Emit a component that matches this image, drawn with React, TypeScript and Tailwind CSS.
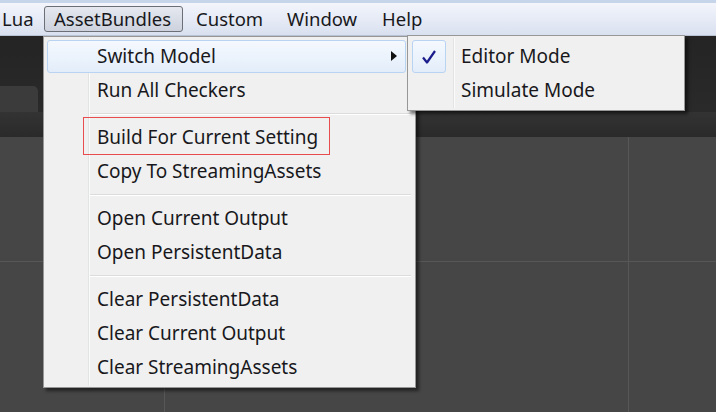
const font = { fontFamily: '"Noto Sans", "Open Sans", sans-serif' };

type Item = { label: string; arrow?: boolean; active?: boolean; marked?: boolean } | "sep";

const items: Item[] = [
  { label: "Switch Model", arrow: true, active: true },
  { label: "Run All Checkers" },
  "sep",
  { label: "Build For Current Setting", marked: true },
  { label: "Copy To StreamingAssets" },
  "sep",
  { label: "Open Current Output" },
  { label: "Open PersistentData" },
  "sep",
  { label: "Clear PersistentData" },
  { label: "Clear Current Output" },
  { label: "Clear StreamingAssets" },
];

function MenuRow({ item }: { item: Exclude<Item, "sep"> }) {
  return (
    <div className="relative h-[34px] flex items-center">
      {item.active && (
        <div className="absolute left-[3px] right-[9px] top-[1px] bottom-0 rounded-[3px] border border-[#b9d3f3] bg-gradient-to-b from-[#f5f9fe] to-[#e3edfa]" />
      )}
      {item.marked && (
        <div className="absolute left-[39px] top-[-3px] w-[247px] h-[38px] border-[1.5px] border-[#e84c4e]" />
      )}
      <span className="relative pl-[53px] text-[19px] text-[#18181c]">{item.label}</span>
      {item.arrow && (
        <svg className="absolute left-[347px] top-[12px]" width="6" height="10" viewBox="0 0 6 10">
          <path d="M0 0 L6 5 L0 10 Z" fill="#111" />
        </svg>
      )}
    </div>
  );
}

export default function App() {
  return (
    <div className="relative w-[716px] h-[412px] overflow-hidden bg-[#464646]" style={font}>
      {/* menu bar */}
      <div className="h-[36px] border-t-[3px] border-[#c7d5ea] bg-gradient-to-b from-[#f3f5fb] via-[#e6ebf6] to-[#d9e0ef] border-b border-b-[#b9c2d3] flex items-center text-[18.5px] text-[#18181c]">
        <span className="pl-[2px] w-[44px]">Lua</span>
        <span className="h-[26px] w-[139px] pl-[9px] flex items-center rounded-[3px] border border-[#6c6f75] bg-gradient-to-b from-[#e5e8ef] to-[#cdd2de]">
          AssetBundles
        </span>
        <span className="ml-[13px] w-[91px]">Custom</span>
        <span className="w-[95px]">Window</span>
        <span>Help</span>
      </div>

      {/* editor header */}
      <div className="h-[101px] bg-gradient-to-b from-[#242424] to-[#2c2c2c] flex flex-col">
        <div className="h-[50px]" />
        <div className="h-[26px] w-[38px] rounded-tr-[5px] bg-[#3b3b3b]" />
        <div className="flex-1 bg-gradient-to-b from-[#333333] to-[#2a2a2a]" />
      </div>

      {/* scene grid */}
      <div className="grid grid-cols-[165px_464px_1fr] grid-rows-[125px_1fr] h-[275px]">
        <div className="border-r border-b border-[#575757]" />
        <div className="border-r border-b border-[#575757]" />
        <div className="border-b border-[#575757]" />
        <div className="border-r border-[#575757]" />
        <div className="border-r border-[#575757]" />
        <div />
      </div>

      {/* main dropdown */}
      <div className="absolute left-[43px] top-[36px] w-[373px] h-[352px] border border-[#979797] bg-[#f0f0f0] shadow-[3px_3px_3px_rgba(0,0,0,0.5)] pt-[2px]">
        <div className="absolute left-[44px] top-[2px] bottom-[2px] w-[2px] border-l border-[#e2e3e3] bg-white/70" />
        {items.map((item, i) =>
          item === "sep" ? (
            <div key={i} className="h-[13px] flex items-center pl-[46px] pr-[4px]">
              <div className="w-full h-[2px] border-t border-[#dcdcdc] bg-white" />
            </div>
          ) : (
            <MenuRow key={i} item={item} />
          )
        )}
      </div>

      {/* submenu */}
      <div className="absolute left-[407px] top-[35px] w-[278px] h-[76px] border border-[#979797] bg-[#f0f0f0] shadow-[3px_3px_3px_rgba(0,0,0,0.5)] pt-[3px]">
        <div className="absolute left-[45px] top-[2px] bottom-[2px] w-[2px] border-l border-[#e2e3e3] bg-white/70" />
        <div className="relative h-[34px] flex items-center">
          <div className="absolute left-[4px] top-[1px] w-[34px] h-[33px] rounded-[3px] border border-[#b9d3f3] bg-gradient-to-b from-[#f5f9fe] to-[#e3edfa] flex items-center justify-center">
            <svg width="16" height="16" viewBox="0 0 16 16">
              <path d="M2 8.5 L6 13.5 L14 2" fill="none" stroke="#1c1d8c" strokeWidth="2.2" strokeLinejoin="round" />
            </svg>
          </div>
          <span className="relative pl-[53px] text-[19px] text-[#18181c]">Editor Mode</span>
        </div>
        <div className="relative h-[34px] flex items-center">
          <span className="relative pl-[53px] text-[19px] text-[#18181c]">Simulate Mode</span>
        </div>
      </div>
    </div>
  );
}
